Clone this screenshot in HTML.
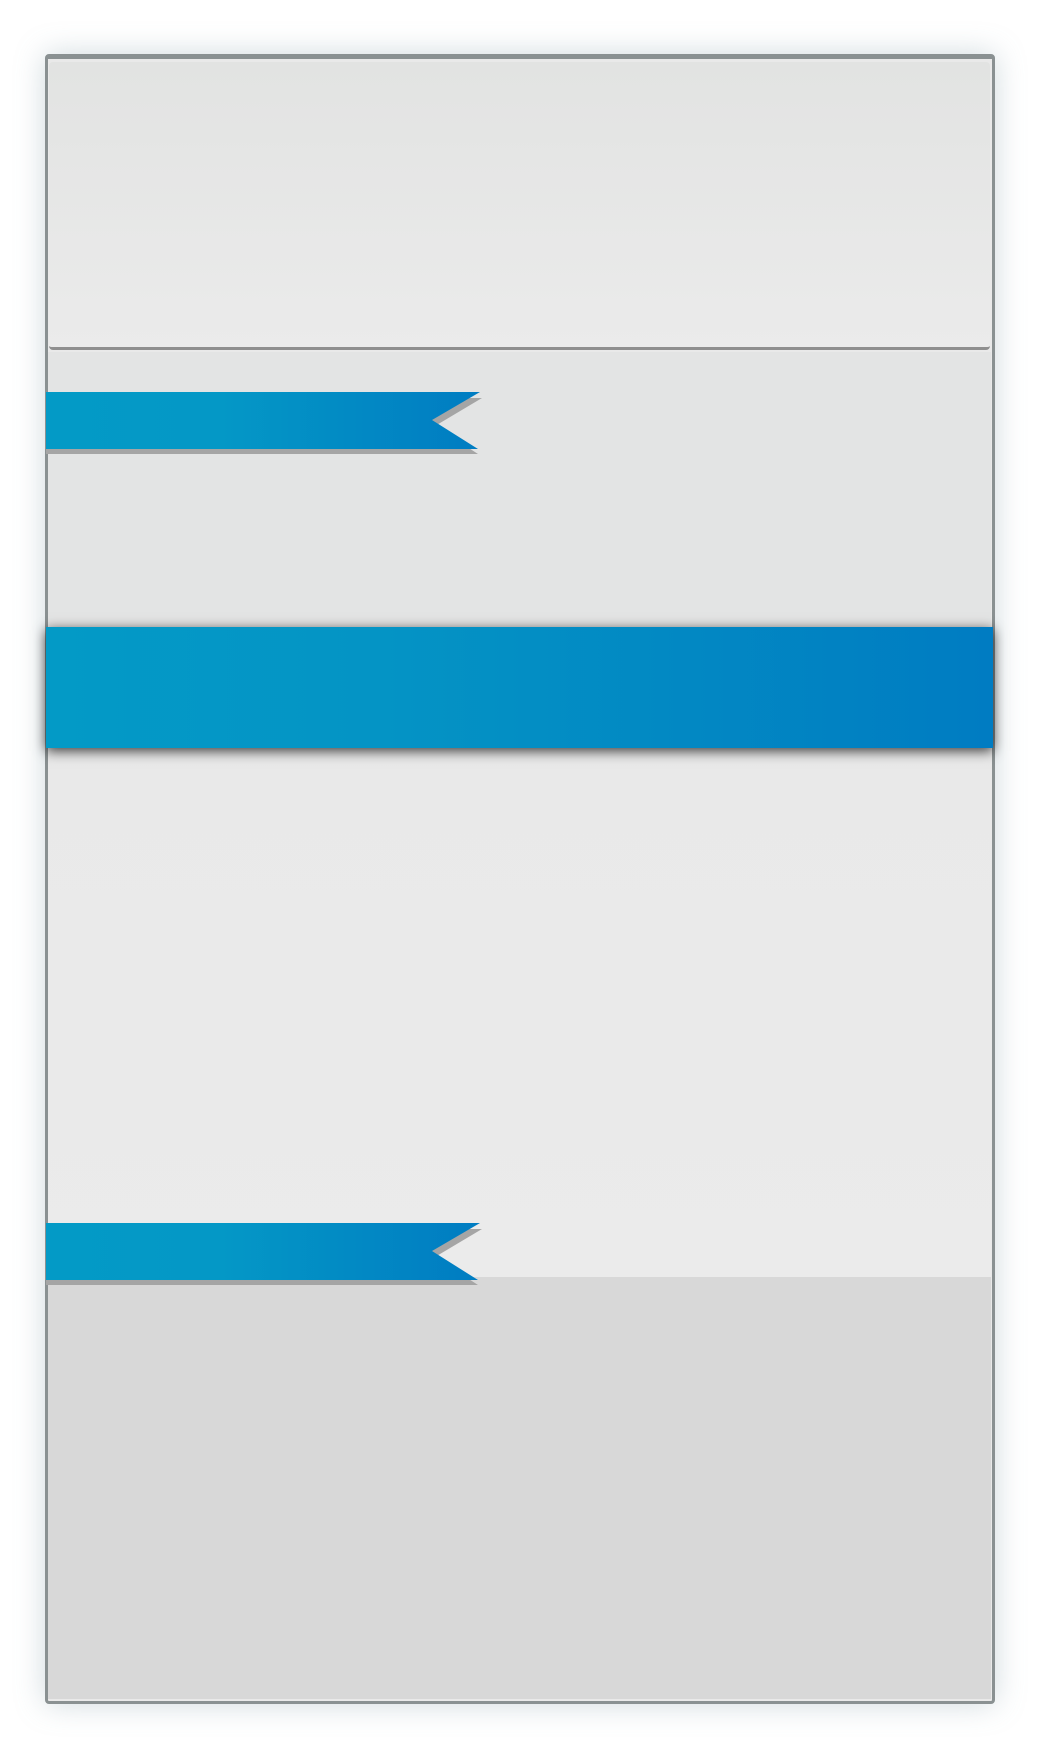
<!DOCTYPE html>
<html><head><style>
html,body{margin:0;padding:0;background:#fff;width:1039px;height:1751px;overflow:hidden;position:relative}
.frame{position:absolute;left:45px;top:54px;width:950px;height:1650px;box-sizing:border-box;border:3px solid #8a9192;border-top-width:5px;border-radius:4px;box-shadow:0 0 30px rgba(120,150,160,.35);background:#e9e9e9}
.p1{position:absolute;left:49px;top:62px;width:941px;height:285px;background:linear-gradient(#e2e3e2,#ebebeb);border-bottom:3px solid #8f8f8f;border-radius:4px}
.p2{position:absolute;left:48px;top:352px;width:943px;height:925px;background:linear-gradient(#e3e4e4 0%,#e3e4e4 30%,#e9e9e9 45%,#ebebeb 100%)}
.p3{position:absolute;left:48px;top:1277px;width:943px;height:422px;background:#d8d8d8}
.big{position:absolute;left:46px;top:627px;width:947px;height:121px;background:linear-gradient(90deg,#039ac6,#0494c5 35%,#0289c3 65%,#007cc2);box-shadow:0 3px 12px rgba(0,0,0,.75)}
svg{position:absolute}
</style></head><body>
<div class="frame"></div>
<div class="p1"></div>
<div class="p2"></div>
<div class="p3"></div>
<div class="big"></div>
<svg width="500" height="70" style="left:46px;top:390px" viewBox="0 0 500 70">
<defs><linearGradient id="g" x1="0" x2="1"><stop offset="0" stop-color="#039ac6"/><stop offset=".4" stop-color="#0498c6"/><stop offset="1" stop-color="#007cc2"/></linearGradient></defs>
<polygon points="0,4 436,4 389,32 432,60 0,60" fill="#a5a5a5" transform="translate(0,4)"/>
<polygon points="0,2 434,2 386,30 432,59 0,59" fill="url(#g)"/>
</svg>
<svg width="500" height="70" style="left:46px;top:1221px" viewBox="0 0 500 70">
<defs><linearGradient id="g2" x1="0" x2="1"><stop offset="0" stop-color="#039ac6"/><stop offset=".4" stop-color="#0498c6"/><stop offset="1" stop-color="#007cc2"/></linearGradient></defs>
<polygon points="0,4 436,4 389,32 432,60 0,60" fill="#a5a5a5" transform="translate(0,4)"/>
<polygon points="0,2 434,2 386,30 432,59 0,59" fill="url(#g2)"/>
</svg>
</body></html>
